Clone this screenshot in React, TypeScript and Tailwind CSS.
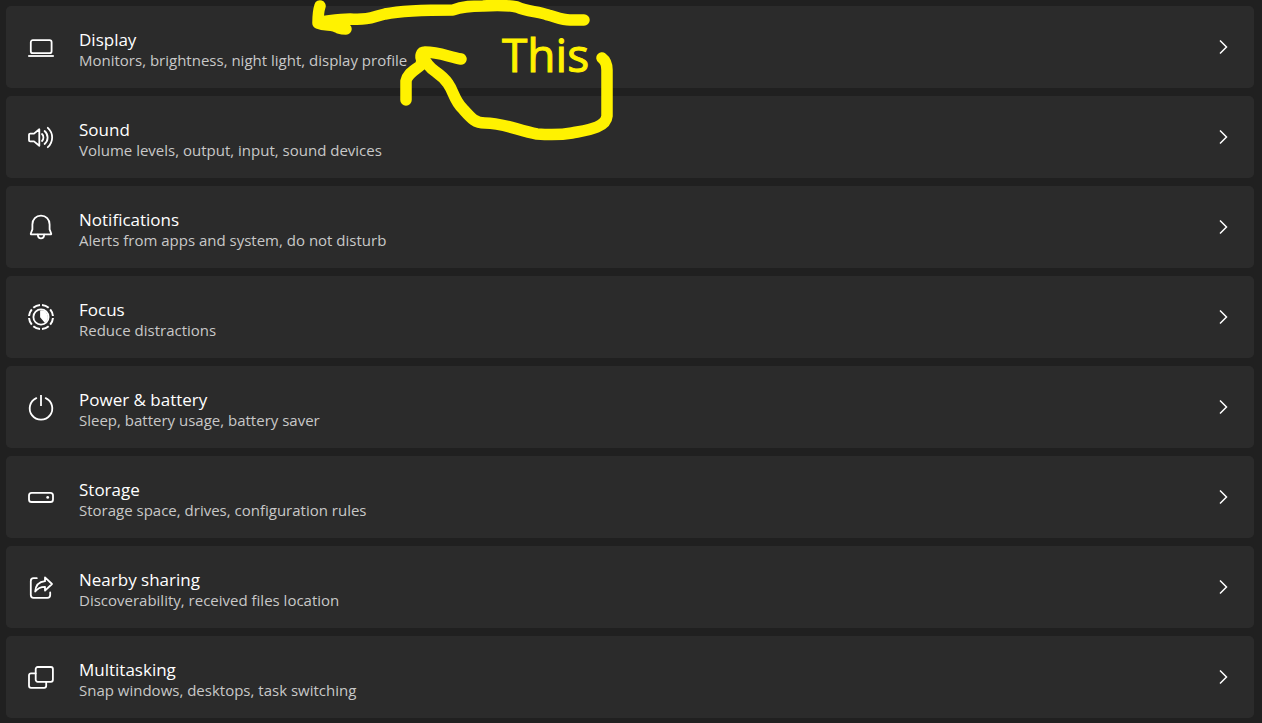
import type { ReactNode } from 'react'

type Setting = {
  title: string
  description: string
  icon: ReactNode
}

const settings: Setting[] = [
  {
    title: 'Display',
    description: 'Monitors, brightness, night light, display profile',
    icon: (
      <>
        <rect x="3.8" y="7.2" width="20.8" height="13" rx="2" />
        <path d="M1.2 23h25.6" strokeLinecap="butt" />
      </>
    ),
  },
  {
    title: 'Sound',
    description: 'Volume levels, output, input, sound devices',
    icon: (
      <>
        <path d="M12.3 6.2v16.6L7 18.4H3.2a1.2 1.2 0 0 1-1.2-1.2v-5.4a1.2 1.2 0 0 1 1.2-1.2H7z" />
        <path d="M15 11c1.9 1.8 1.9 5.2 0 7" />
        <path d="M17.6 8c4 3.6 4 9.4 0 13" />
        <path d="M20.8 4.8c5.8 5.2 5.8 14.2 0 19.4" />
      </>
    ),
  },
  {
    title: 'Notifications',
    description: 'Alerts from apps and system, do not disturb',
    icon: (
      <>
        <path d="M14 2.6c-5 0-8.6 3.8-8.6 8.8v5l-1.6 4.1c-.2.5.1.9.6.9h19.2c.5 0 .8-.4.6-.9l-1.6-4.1v-5c0-5-3.6-8.8-8.6-8.8z" />
        <path d="M10.8 21.6c.2 2.4 1.4 3.8 3.2 3.8s3-1.4 3.2-3.8" />
      </>
    ),
  },
  {
    title: 'Focus',
    description: 'Reduce distractions',
    icon: (
      <>
        <circle
          cx="14"
          cy="14"
          r="12"
          strokeWidth="2"
          strokeLinecap="butt"
          pathLength="80"
          strokeDasharray="7.8 2.2"
          strokeDashoffset="-1.1"
        />
        <circle cx="14" cy="14" r="7.6" />
        <path d="M14 8.2a5.8 5.8 0 0 1 3.8 10.3L14 14z" fill="currentColor" />
      </>
    ),
  },
  {
    title: 'Power & battery',
    description: 'Sleep, battery usage, battery saver',
    icon: (
      <>
        <path d="M14 2v11" strokeLinecap="butt" />
        <path d="M9.3 5.1a11.3 11.3 0 1 0 9.4 0" />
      </>
    ),
  },
  {
    title: 'Storage',
    description: 'Storage space, drives, configuration rules',
    icon: (
      <>
        <rect x="2" y="9.8" width="24" height="9.2" rx="2.6" />
        <circle cx="20.7" cy="14.4" r="1.4" fill="currentColor" stroke="none" />
      </>
    ),
  },
  {
    title: 'Nearby sharing',
    description: 'Discoverability, received files location',
    icon: (
      <>
        <path d="M9.8 5.2H6.6A2.8 2.8 0 0 0 3.8 8v14a2.8 2.8 0 0 0 2.8 2.8h13.8a2.8 2.8 0 0 0 2.8-2.8v-2.6" />
        <path d="M18 4.4l7 6.6-7 6.6v-3.8c-4.6 0-7.4 1.4-9.8 4.8.4-6 3.8-9.8 9.8-10.4z" />
      </>
    ),
  },
  {
    title: 'Multitasking',
    description: 'Snap windows, desktops, task switching',
    icon: (
      <>
        <rect x="8.7" y="4" width="17.2" height="14.8" rx="2" />
        <path d="M8.7 10.3H4a2 2 0 0 0-2 2v10.5a2 2 0 0 0 2 2h13.2a2 2 0 0 0 2-2v-4" />
      </>
    ),
  },
]

function SettingRow({ title, description, icon }: Setting) {
  return (
    <li>
      <button
        type="button"
        className="flex h-[82px] w-full items-center gap-6 rounded-[5px] bg-[#2b2b2b] pr-6 pl-[21px] text-left"
      >
        <svg
          viewBox="0 0 28 28"
          className="size-7 shrink-0 text-white"
          fill="none"
          stroke="currentColor"
          strokeWidth="1.8"
          strokeLinecap="round"
          strokeLinejoin="round"
          aria-hidden="true"
        >
          {icon}
        </svg>
        <span className="flex-1 pt-1">
          <span className="block text-[17px] leading-[22px] text-white">{title}</span>
          <span className="block text-[15px] leading-[18px] text-[#c8c8c8]">{description}</span>
        </span>
        <svg
          viewBox="0 0 12 16"
          className="h-4 w-3 shrink-0 text-white"
          fill="none"
          stroke="currentColor"
          strokeWidth="1.5"
          aria-hidden="true"
        >
          <path d="M2 1.5L8.500 8 2 14.5" />
        </svg>
      </button>
    </li>
  )
}

// Hand drawn arrows and note, laid over the list
function Annotation() {
  return (
    <div className="pointer-events-none absolute top-0 left-[300px] h-[150px] w-80 text-[#fff200]">
      <svg
        viewBox="0 0 320 150"
        className="size-full"
        fill="none"
        stroke="currentColor"
        strokeWidth="11.5"
        strokeLinecap="round"
        strokeLinejoin="round"
        aria-hidden="true"
      >
        <path d="M20 6c-2 6-2 11-2 17 8 3 15 1 21 5 3 1 5 1 7 1" />
        <path d="M20 22c10-1 18-3 30-3 20 1 22-2 35-5 20-4 45-4 68-4 10-4 20-4 30-4 14-1 23-1 34 1 11 5 20 4 31 8 8 2 14 5 22 5h14" />
        <path d="M161 59c-12-2-22-7-36-7-4 0-5 4-3 8l-1 5c-7 6-14 9-15 16v19" />
        <path d="M123 56c3 8 7 12 13 16 20 14 14 24 27 37 8 9 12 14 22 14 18 0 32 7 52 11 13 1 24 1 35-1 15-3 34-5 35-17V70c0-5-1-9-5-12" />
      </svg>
      <span className="absolute top-6 left-[202px] font-['Comic_Sans_MS','Open_Sans',sans-serif] text-[46px] leading-[60px] [-webkit-text-stroke:1px_#fff200]">
        This
      </span>
    </div>
  )
}

export default function App() {
  return (
    <main className="relative min-h-screen bg-[#202020] pt-1.5 pr-2 pb-[5px] pl-1.5 font-['Segoe_UI','Open_Sans',sans-serif]">
      <ul className="flex flex-col gap-2">
        {settings.map((setting) => (
          <SettingRow key={setting.title} {...setting} />
        ))}
      </ul>
      <Annotation />
    </main>
  )
}
